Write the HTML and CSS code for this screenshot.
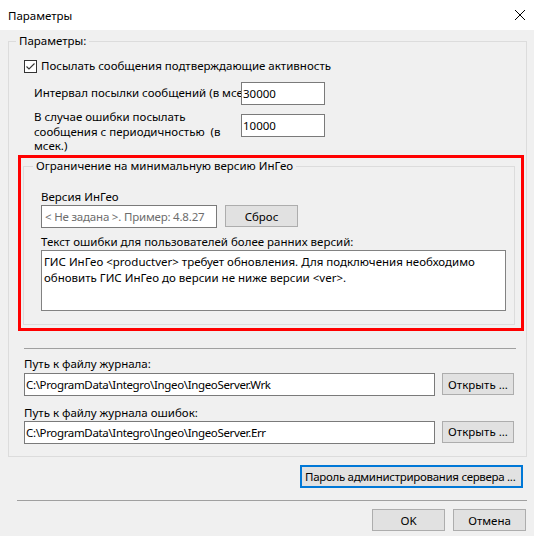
FILE: index.html
```html
<!DOCTYPE html>
<html lang="ru">
<head>
  <meta charset="UTF-8" />
  <meta name="viewport" content="width=device-width, initial-scale=1.0"/>
  <title>Параметры</title>
  <link rel="stylesheet" href="styles.css">
</head>
<body>

  <!-- заголовок окна -->
  <div class="titlebar">
    <span class="title">Параметры</span>
    <svg class="close" width="10" height="10" viewBox="0 0 10 10">
      <path d="M0 0 L10 10 M10 0 L0 10" stroke="#000" stroke-width="1" fill="none"/>
    </svg>
  </div>

  <div class="client">

    <fieldset class="group main-group">
      <legend>Параметры:</legend>

      <label class="check-row">
        <span class="checkbox">
          <svg width="11" height="11" viewBox="0 0 11 11">
            <path d="M1.5 5.5 L4 8 L9.5 2.5" stroke="#333" stroke-width="1.1" fill="none"/>
          </svg>
        </span>
        Посылать сообщения подтверждающие активность
      </label>

      <div class="field-row interval">
        <span class="field-label">Интервал посылки сообщений (в мсек.)</span>
        <input class="edit num" type="text" value="30000">
      </div>

      <div class="field-row retry">
        <span class="field-label">В случае ошибки посылать<br>сообщения с периодичностью&nbsp; (в<br>мсек.)</span>
        <input class="edit num" type="text" value="10000">
      </div>

      <!-- выделенная область -->
      <div class="highlight">
        <fieldset class="group version-group">
          <legend>Ограничение на минимальную версию ИнГео</legend>
          <div class="group-body">
            <div class="caption ver-caption">Версия ИнГео</div>
            <div class="version-row">
              <input class="edit version" type="text" placeholder="&lt; Не задана &gt;. Пример: 4.8.27">
              <button class="btn reset">Сброс</button>
            </div>
            <div class="caption msg-caption">Текст ошибки для пользователей более ранних версий:</div>
            <textarea class="memo">ГИС ИнГео &lt;productver&gt; требует обновления. Для подключения необходимо
обновить ГИС ИнГео до версии не ниже версии &lt;ver&gt;.</textarea>
          </div>
        </fieldset>
      </div>

      <hr class="sep inner-sep">

      <div class="caption log-caption">Путь к файлу журнала:</div>
      <div class="path-row">
        <input class="edit path" type="text" value="C:\ProgramData\Integro\Ingeo\IngeoServer.Wrk">
        <button class="btn open">Открыть ...</button>
      </div>

      <div class="caption log-caption err">Путь к файлу журнала ошибок:</div>
      <div class="path-row err">
        <input class="edit path" type="text" value="C:\ProgramData\Integro\Ingeo\IngeoServer.Err">
        <button class="btn open">Открыть ...</button>
      </div>
    </fieldset>

    <div class="admin-row">
      <button class="btn admin">Пароль администрирования сервера ...</button>
    </div>

    <hr class="sep bottom-sep">

    <div class="dialog-buttons">
      <button class="btn dlg">OK</button>
      <button class="btn dlg">Отмена</button>
    </div>

  </div>

</body>
</html>
```

FILE: styles.css
```css
html, body {
  margin: 0;
  height: 100%;
}

body {
  background-color: #f0f0f0;
  font-family: "Noto Sans", "Open Sans", sans-serif;
  font-size: 11.5px;
  color: #000;
  overflow: hidden;
}

.titlebar {
  height: 30px;
  background-color: #fff;
  display: flex;
  align-items: center;
  justify-content: space-between;
  padding: 0 9px 0 8px;
}

.client {
  padding-top: 3px;
}

/* групповые рамки */
.group {
  border: 1px solid #dcdcdc;
  margin: 0;
  padding: 0;
  min-width: 0;
}

.group legend {
  padding: 0 3px;
  line-height: 16px;
}

.main-group {
  margin: 0 7px 0 8px;
  padding-bottom: 12px;
}

.main-group > legend {
  margin-left: 7px;
}

.check-row {
  display: flex;
  align-items: center;
  gap: 4px;
  margin: 9px 0 0 15px;
  line-height: 16px;
}

.checkbox {
  width: 13px;
  height: 13px;
  box-sizing: border-box;
  border: 1px solid #333;
  background-color: #fff;
  display: flex;
}

.field-row {
  display: flex;
  margin-left: 25px;
}

.field-row.interval {
  margin-top: 8px;
  align-items: center;
}

.field-row.retry {
  margin-top: 5px;
  align-items: flex-start;
}

.field-label {
  width: 207px;
  overflow: hidden;
  white-space: nowrap;
  line-height: 14.5px;
}

.retry .edit {
  margin-top: 4px;
}

.edit {
  font: inherit;
  color: #000;
  background-color: #fff;
  border: 1px solid #7a7a7a;
  box-sizing: border-box;
  height: 23px;
  padding: 0 0 0 1px;
  margin: 0;
  outline: none;
}

.num {
  width: 84px;
}

.btn {
  font: inherit;
  color: #000;
  background-color: #e1e1e1;
  border: 1px solid #adadad;
  box-sizing: border-box;
  height: 22px;
  padding: 0;
  margin: 0;
  white-space: nowrap;
}

/* красная рамка */
.highlight {
  margin: 1.5px 0 0 9px;
  width: 506px;
  box-sizing: border-box;
  border: 3px solid #ff0000;
  padding: 0 6px 3px 2px;
}

.version-group > legend {
  margin-left: 9px;
}

.group-body {
  padding: 0 0 13px 17px;
}

.caption {
  line-height: 16px;
}

.ver-caption {
  margin-top: 15px;
}

.version-row {
  display: flex;
  align-items: flex-start;
  gap: 8px;
}

.version {
  width: 176px;
  padding-left: 3px;
  letter-spacing: -0.2px;
}

.version::placeholder {
  color: #6d6d6d;
  opacity: 1;
}

.reset {
  width: 73px;
}

.msg-caption {
  margin-top: 6px;
}

.memo {
  display: block;
  width: 465px;
  height: 61px;
  box-sizing: border-box;
  margin: 0;
  padding: 3px 2px;
  font: inherit;
  line-height: 15.5px;
  color: #000;
  border: 1px solid #828282;
  resize: none;
  overflow: hidden;
  white-space: pre;
  outline: none;
}

.sep {
  border: 0;
  border-top: 1px solid #a0a0a0;
  height: 0;
}

.inner-sep {
  margin: 17px 0 0 15px;
  width: 492px;
}

.log-caption {
  margin: 7px 0 0 15px;
}

.log-caption.err {
  margin-top: 8.5px;
}

.path-row {
  display: flex;
  align-items: flex-start;
  gap: 7px;
  margin: 1px 0 0 15px;
}

.path-row.err {
  margin-top: 0;
}

.path {
  width: 411px;
  letter-spacing: -0.35px;
}

.open {
  width: 72px;
}

.admin-row {
  display: flex;
  justify-content: flex-end;
  margin-top: 8px;
  padding-right: 11px;
}

.admin {
  width: 223px;
  height: 23px;
  border: 2px solid #0078d7;
  text-align: left;
  padding-left: 3px;
  letter-spacing: -0.3px;
  overflow: hidden;
}

.bottom-sep {
  margin: 12.5px 7px 0 17px;
}

.dialog-buttons {
  display: flex;
  justify-content: flex-end;
  gap: 8px;
  margin-top: 8px;
  padding-right: 8px;
}

.dlg {
  width: 73px;
}
```
